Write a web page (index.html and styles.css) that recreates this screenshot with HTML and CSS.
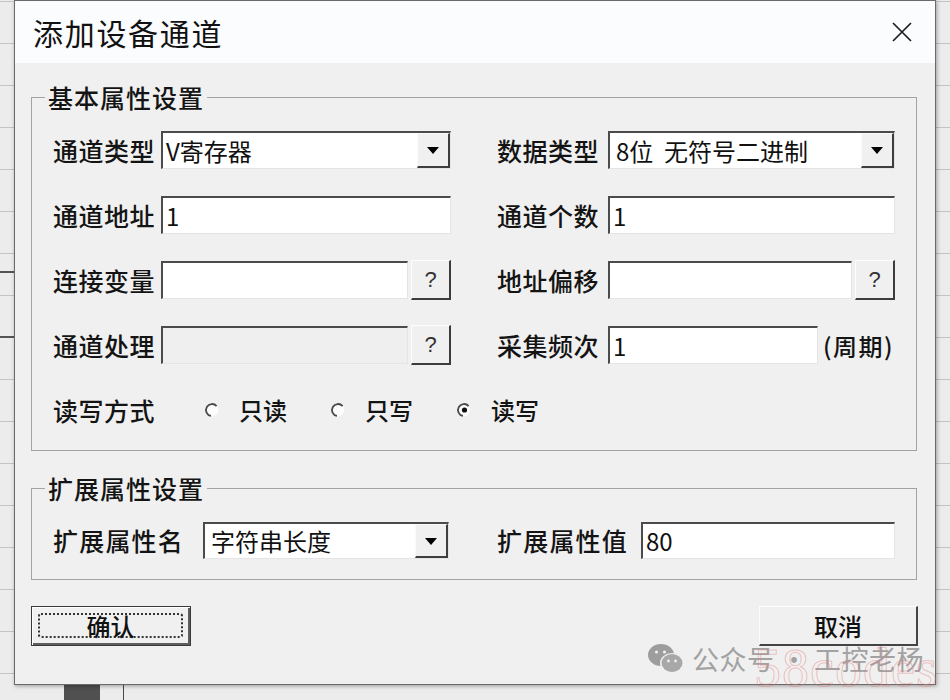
FILE: index.html
```html
<!DOCTYPE html>
<html lang="zh-CN">
<head>
<meta charset="utf-8">
<title>添加设备通道</title>
<link rel="stylesheet" href="styles.css">
</head>
<body>
<div class="desktop">
  <div class="dialog">
    <div class="titlebar">
      <span class="title">添加设备通道</span>
      <span class="close" aria-label="关闭">
        <svg width="20" height="20" viewBox="0 0 20 20"><path d="M1 1 L19 19 M19 1 L1 19" stroke="#1e1e1e" stroke-width="1.7" fill="none"/></svg>
      </span>
    </div>
    <div class="body">
      <fieldset class="group">
        <legend>基本属性设置</legend>
        <div class="grid basic">
          <span class="lbl">通道类型</span>
          <div class="combo"><span class="val">V寄存器</span><span class="drop"><i class="tri"></i></span></div>
          <span class="lbl rcol">数据类型</span>
          <div class="combo"><span class="val pad">8位&nbsp; 无符号二进制</span><span class="drop"><i class="tri"></i></span></div>

          <span class="lbl">通道地址</span>
          <div class="input">1</div>
          <span class="lbl rcol">通道个数</span>
          <div class="input">1</div>

          <span class="lbl">连接变量</span>
          <div class="field"><div class="input grow"></div><span class="qbtn">?</span></div>
          <span class="lbl rcol">地址偏移</span>
          <div class="field"><div class="input grow"></div><span class="qbtn">?</span></div>

          <span class="lbl">通道处理</span>
          <div class="field"><div class="input grow disabled"></div><span class="qbtn">?</span></div>
          <span class="lbl rcol">采集频次</span>
          <div class="field"><div class="input short">1</div><span class="unit">(周期)</span></div>

          <span class="lbl">读写方式</span>
          <div class="radios">
            <span class="radio">
              <svg width="16" height="16" viewBox="0 0 16 16"><circle cx="8" cy="8" r="6.2" fill="#fdfdfd"/><path d="M12.6 4.1 A6 6 0 1 0 6.96 13.9" stroke="#4a4a4a" stroke-width="1.8" fill="none"/></svg>
              <span>只读</span>
            </span>
            <span class="radio">
              <svg width="16" height="16" viewBox="0 0 16 16"><circle cx="8" cy="8" r="6.2" fill="#fdfdfd"/><path d="M12.6 4.1 A6 6 0 1 0 6.96 13.9" stroke="#4a4a4a" stroke-width="1.8" fill="none"/></svg>
              <span>只写</span>
            </span>
            <span class="radio">
              <svg width="16" height="16" viewBox="0 0 16 16"><circle cx="8" cy="8" r="6.2" fill="#fdfdfd"/><path d="M12.6 4.1 A6 6 0 1 0 6.96 13.9" stroke="#4a4a4a" stroke-width="1.8" fill="none"/><circle cx="8.5" cy="8" r="2.6" fill="#111"/></svg>
              <span>读写</span>
            </span>
          </div>
        </div>
      </fieldset>

      <fieldset class="group ext">
        <legend>扩展属性设置</legend>
        <div class="grid extgrid">
          <span class="lbl wide">扩展属性名</span>
          <div class="combo"><span class="val pad">字符串长度</span><span class="drop"><i class="tri"></i></span></div>
          <span class="lbl wide rcol">扩展属性值</span>
          <div class="input">80</div>
        </div>
      </fieldset>

      <div class="actions">
        <button class="btn default"><span class="focus">确认</span></button>
        <button class="btn cancel">取消</button>
      </div>
    </div>
  </div>

  <div class="watermark">
    <svg class="wechat" width="38" height="32" viewBox="0 0 38 32">
      <ellipse cx="14" cy="12" rx="13" ry="11" fill="#9d9d9d"/>
      <ellipse cx="25" cy="20" rx="12" ry="10" fill="#f0f0f0"/>
      <ellipse cx="25" cy="20" rx="10.5" ry="9" fill="#a8a8a8"/>
      <circle cx="9.5" cy="9" r="1.6" fill="#f0f0f0"/>
      <circle cx="17.5" cy="9" r="1.6" fill="#f0f0f0"/>
      <circle cx="21.5" cy="18" r="1.4" fill="#f0f0f0"/>
      <circle cx="28.5" cy="18" r="1.4" fill="#f0f0f0"/>
    </svg>
    <span class="wm-text">公众号<span class="wm-dot">·</span>工控老杨</span>
  </div>
  <div class="stamp">58codes</div>
</div>
</body>
</html>
```

FILE: styles.css
```css
* { box-sizing: border-box; }
html, body { margin: 0; padding: 0; }
body {
  width: 950px;
  height: 700px;
  overflow: hidden;
  font-family: "Noto Sans CJK SC", "Noto Sans", sans-serif;
  color: #141414;
}

.desktop {
  position: relative;
  width: 950px;
  height: 700px;
  background-color: #ececec;
  background-image:
    linear-gradient(#505050, #505050),
    linear-gradient(#4a4a4a, #4a4a4a),
    linear-gradient(#555, #555),
    linear-gradient(#555, #555),
    repeating-linear-gradient(to bottom, #c4c4c4 0 1px, transparent 1px 42px);
  background-size: 36px 15px, 1px 15px, 14px 2px, 14px 2px, 100% 100%;
  background-position: 64px 685px, 123px 685px, 0 271px, 0 336px, 0 1px;
  background-repeat: no-repeat;
}

.dialog {
  margin-left: 14px;
  width: 922px;
  height: 685px;
  border: 1px solid #6a6a6a;
  background: #f0f0f0;
  box-shadow: 1px 1px 4px rgba(0, 0, 0, 0.35);
  display: flex;
  flex-direction: column;
}

.titlebar {
  height: 62px;
  flex: none;
  background: #fbfcfd;
  display: flex;
  align-items: center;
  justify-content: space-between;
  padding: 0 23px 0 18px;
}
.title {
  font-size: 30px;
  line-height: 1;
  letter-spacing: 1.7px;
  color: #111;
}
.close { display: flex; }

.body {
  padding: 19px 18px 0 16px;
}

.group {
  margin: 0;
  min-width: 0;
  border: 1px solid #a3a3a3;
  padding: 19px 21px 21px 21px;
}
.group legend {
  margin-left: -8px;
  padding: 0 3px;
  font-size: 25px;
  line-height: 30px;
  letter-spacing: 1px;
  font-weight: 500;
  color: #141414;
}
.group.ext {
  margin-top: 22px;
  padding-bottom: 20px;
}

.grid {
  display: grid;
  align-items: center;
  row-gap: 27px;
}
.basic {
  grid-template-columns: 108px 290px 46px 111px minmax(0, 1fr);
  grid-auto-rows: 38px;
}
.extgrid {
  grid-template-columns: 150px 246px 48px 144px minmax(0, 1fr);
  grid-auto-rows: 37px;
}
.rcol { grid-column: 4; }

.lbl {
  font-size: 25px;
  line-height: 1;
  letter-spacing: 0.5px;
  font-weight: 500;
  white-space: nowrap;
}
.lbl.wide { letter-spacing: 1.2px; }

.input, .combo {
  height: 100%;
  min-width: 0;
  background: #fff;
  border-style: solid;
  border-width: 2px 1px 1px 2px;
  border-color: #4b4b4b #e4e4e4 #e4e4e4 #4b4b4b;
  font-size: 24px;
  line-height: 1;
  display: flex;
  align-items: center;
  padding-left: 3px;
  white-space: nowrap;
  color: #111;
}
.input.disabled { background: #efefef; }
.input.grow { flex: 1; }
.input.short { width: 210px; flex: none; }

.combo { padding-left: 0; }
.combo .val { flex: 1; padding-left: 3px; }
.combo .val.pad { padding-left: 6px; }
.drop {
  width: 33px;
  flex: none;
  height: 100%;
  background: #f0f0f0;
  border-style: solid;
  border-width: 1px 2px 2px 1px;
  border-color: #fafafa #3e3e3e #3e3e3e #fafafa;
  display: flex;
  align-items: center;
  justify-content: center;
}
.tri {
  width: 0;
  height: 0;
  border-left: 6px solid transparent;
  border-right: 6px solid transparent;
  border-top: 7px solid #000;
  margin-top: 1px;
}

.field {
  height: 100%;
  min-width: 0;
  display: flex;
  align-items: center;
}
.qbtn {
  width: 40px;
  height: 40px;
  flex: none;
  margin-left: 3px;
  background: #f0f0f0;
  border-style: solid;
  border-width: 1px 2px 2px 1px;
  border-color: #fdfdfd #3c3c3c #3c3c3c #fdfdfd;
  font-family: "Liberation Sans", sans-serif;
  font-size: 22px;
  color: #333;
  display: flex;
  align-items: center;
  justify-content: center;
}
.unit {
  margin-left: 5px;
  font-size: 24px;
  letter-spacing: 1.5px;
  font-weight: 500;
  white-space: nowrap;
}

.radios {
  grid-column: 2 / -1;
  display: flex;
  align-items: center;
  padding-left: 43px;
}
.radio {
  width: 126px;
  display: flex;
  align-items: center;
  gap: 19px;
  font-size: 24px;
  line-height: 1;
  font-weight: 500;
}
.radio svg { flex: none; }

.actions {
  margin-top: 26px;
  display: flex;
  justify-content: space-between;
  margin-right: -1px;
}
.btn {
  height: 40px;
  padding: 0;
  margin: 0;
  font-family: "Noto Sans CJK SC", sans-serif;
  font-size: 24px;
  font-weight: 500;
  color: #111;
  background: #f0f0f0;
  display: flex;
  align-items: center;
  justify-content: center;
}
.btn.default {
  width: 160px;
  border: 1px solid #3a3a3a;
  box-shadow: inset 1px 1px 0 #ffffff, inset -2px -2px 0 #5e5e5e;
  padding: 6px 7px 7px 6px;
}
.btn.default .focus {
  width: 100%;
  height: 100%;
  border: 2px dotted #333;
  border-radius: 3px;
  display: flex;
  align-items: center;
  justify-content: center;
  line-height: 1;
}
.btn.cancel {
  width: 159px;
  border-style: solid;
  border-width: 1px 2px 2px 1px;
  border-color: #fcfcfc #444 #444 #fcfcfc;
  line-height: 1;
}

.watermark {
  position: absolute;
  left: 647px;
  top: 643px;
  display: flex;
  align-items: center;
  gap: 7px;
}
.wm-text {
  font-size: 27px;
  line-height: 32px;
  color: #a2a2a2;
  letter-spacing: 0.5px;
  white-space: nowrap;
}
.wm-dot { margin: 0 6px; }

.stamp {
  position: absolute;
  left: 754px;
  top: 649px;
  font-family: "Liberation Serif", serif;
  font-size: 54px;
  line-height: 38px;
  letter-spacing: 1px;
  color: transparent;
  -webkit-text-stroke: 1px rgba(226, 120, 120, 0.4);
  white-space: nowrap;
}
```
